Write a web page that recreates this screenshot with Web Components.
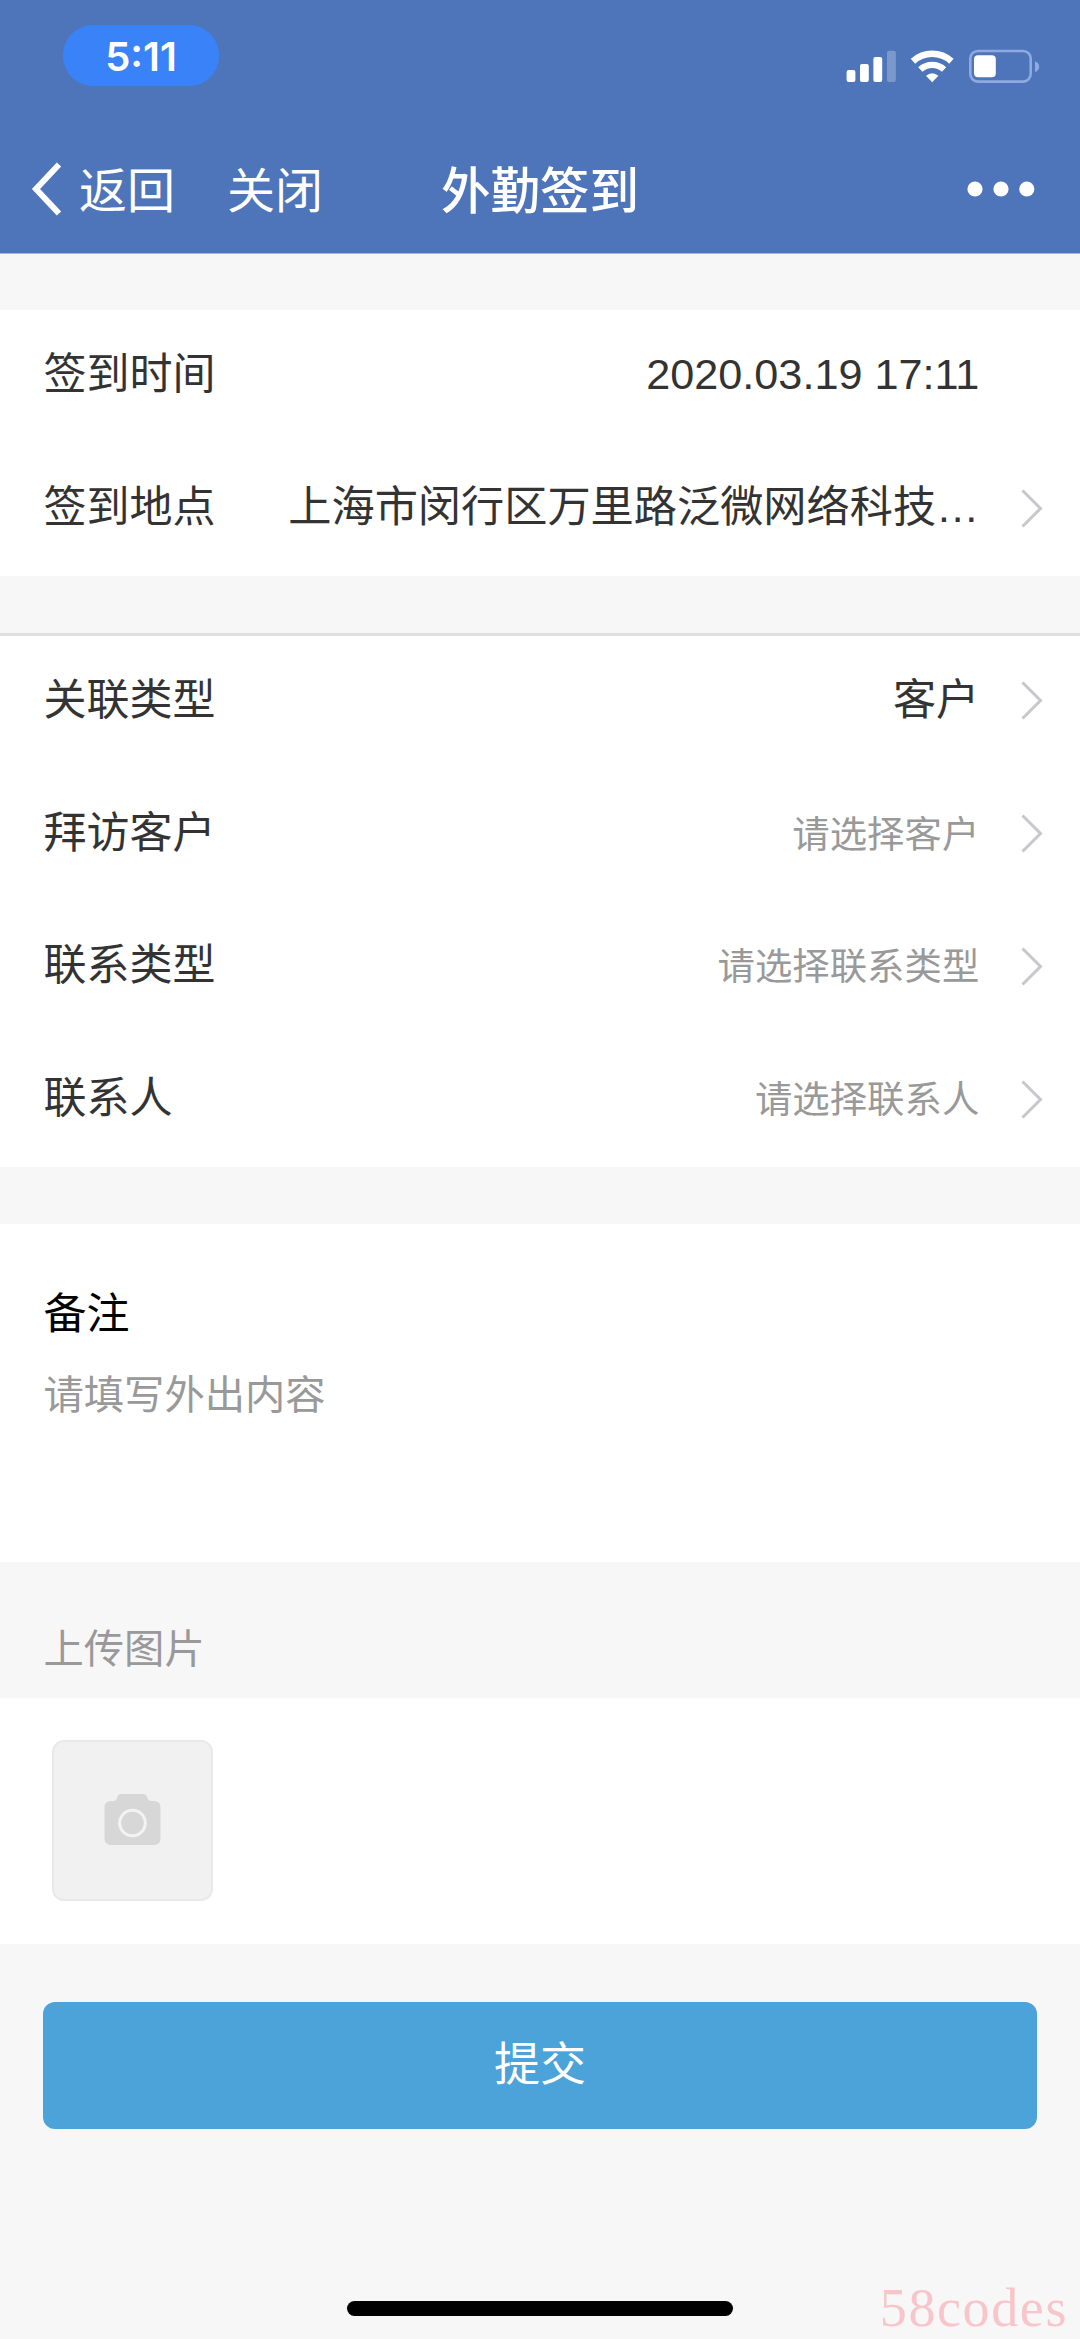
<!DOCTYPE html>
<html lang="zh-CN">
<head>
<meta charset="utf-8">
<meta name="viewport" content="width=device-width">
<title>外勤签到</title>
<style>
  body {
    margin: 0;
    background: #f7f7f7;
    color: #333;
    font-family: "Liberation Sans", "Noto Sans CJK SC", sans-serif;
    font-size: 43.2px;
  }
</style>
</head>
<body>

<checkin-page>
  <status-bar slot="header" time="5:11"></status-bar>
  <nav-bar slot="header" back="返回" close="关闭">外勤签到</nav-bar>

  <form-section>
    <form-row label="签到时间">2020.03.19 17:11</form-row>
    <form-row label="签到地点" link>上海市闵行区万里路泛微网络科技…</form-row>
  </form-section>

  <form-section lined>
    <form-row label="关联类型" link>客户</form-row>
    <form-row label="拜访客户" placeholder="请选择客户" link></form-row>
    <form-row label="联系类型" placeholder="请选择联系类型" link></form-row>
    <form-row label="联系人" placeholder="请选择联系人" link></form-row>
  </form-section>

  <form-section>
    <remark-field label="备注">请填写外出内容</remark-field>
  </form-section>

  <photo-upload>上传图片</photo-upload>
  <submit-button>提交</submit-button>
  <home-indicator slot="footer"></home-indicator>
  <water-mark slot="footer">58codes</water-mark>
</checkin-page>

<script>
// Shared base: puts the class's template into an open shadow root.
class BaseElement extends HTMLElement {
  connectedCallback() {
    if (!this.shadowRoot) this.attachShadow({ mode: "open" });
    this.shadowRoot.innerHTML = this.template();
  }

  attr(name) {
    return this.getAttribute(name) || "";
  }
}

class CheckinPage extends BaseElement {
  template() {
    return `
      <style>
        :host { display: flex; flex-direction: column; position: relative; height: 2339px; }
        header { height: 254px; margin-bottom: 56px; background: #4e75b9; color: #fff; border-bottom: 1px solid #a5b7da; box-sizing: border-box; }
      </style>
      <header><slot name="header"></slot></header>
      <slot></slot>
      <slot name="footer"></slot>`;
  }
}

class StatusBar extends BaseElement {
  template() {
    return `
      <style>
        :host { display: flex; justify-content: space-between; height: 127px; padding: 25px 40px 0 63px; box-sizing: border-box; }
        .time {
          width: 156px; height: 61px; border-radius: 30px; background: #3a82f7;
          font: 600 40px/63px Inter, sans-serif; text-align: center;
        }
        svg { display: block; margin-top: 23px; }
      </style>
      <div class="time">${this.attr("time")}</div>
      <svg width="194" height="36" viewBox="846 48 194 36" fill="#fff">
        <rect x="846.6" y="70" width="8.8" height="12" rx="2"/>
        <rect x="860" y="64" width="8.8" height="18" rx="2"/>
        <rect x="873.4" y="57" width="8.8" height="25" rx="2"/>
        <rect x="887" y="50.7" width="8.8" height="31.3" rx="2" opacity=".26"/>
        <g fill="none" stroke="#fff">
          <path d="M913 61.2 A28.6 28.6 0 0 1 951.4 61.2" stroke-width="6.6"/>
          <path d="M920.3 69.6 A17.4 17.4 0 0 1 944.1 69.6" stroke-width="6.2"/>
        </g>
        <path d="M926 75.8 Q932.2 70.8 938.4 75.8 L932.2 82.2 Z"/>
        <rect x="970.3" y="51" width="60.4" height="30.6" rx="7.5" fill="none" stroke="#8faae0" stroke-width="2.6"/>
        <rect x="974" y="55.3" width="21.8" height="22" rx="4"/>
        <path d="M1035 61.3 Q1039.2 63 1039.2 66.8 T1035 72.3 Z" fill="#8faae0"/>
      </svg>`;
  }
}

class NavBar extends BaseElement {
  template() {
    return `
      <style>
        :host { display: grid; grid-template-columns: 1fr auto 1fr; align-items: center; height: 124px; font-size: 48px; line-height: 72px; padding: 0 45px 0 31px; }
        .left { display: flex; align-items: center; }
        .back { width: 31px; margin-right: 17px; }
        .left span { padding-top: 5px; }
        .close { margin-left: 52px; }
        .title { font-size: 49.5px; font-weight: 500; padding: 5px 0 0 14px; }
        .more { justify-self: end; }
        svg { display: block; }
      </style>
      <div class="left">
        <svg class="back" width="31" height="54" viewBox="0 0 31 54" fill="none" stroke="#fff" stroke-width="6"><path d="M28 2.5 L5 27 L28 51.5"/></svg>
        <span>${this.attr("back")}</span>
        <span class="close">${this.attr("close")}</span>
      </div>
      <div class="title"><slot></slot></div>
      <svg class="more" width="68" height="16" viewBox="0 0 68 16" fill="#fff">
        <circle cx="8" cy="8" r="7.6"/><circle cx="34" cy="8" r="7.6"/><circle cx="59.8" cy="8" r="7.6"/>
      </svg>`;
  }
}

class FormSection extends BaseElement {
  template() {
    return `
      <style>
        :host { display: block; background: #fff; margin-bottom: 57px; }
        :host([lined]) { border-top: 3px solid #dfdfdf; }
      </style>
      <slot></slot>`;
  }
}

class FormRow extends BaseElement {
  template() {
    const placeholder = this.attr("placeholder");
    const arrow = this.hasAttribute("link")
      ? `<svg width="22" height="40" viewBox="0 0 22 40" fill="none" stroke="#c7c7cc" stroke-width="3"><path d="M1.5 1.5 L19.5 19.5 L1.5 37.5"/></svg>`
      : "";
    return `
      <style>
        :host { display: flex; align-items: center; height: 132.75px; padding: 0 37px 0 43.5px; line-height: 64px; }
        .label { flex: none; width: 244.5px; padding-bottom: 4px; font-size: 43px; }
        .value { flex: none; width: 691.3px; padding-bottom: 4px; text-align: right; white-space: nowrap; }
        .placeholder { font-size: 37.4px; color: #999; padding-bottom: 0; }
        svg { display: block; margin: 0 0 1px auto; }
      </style>
      <div class="label">${this.attr("label")}</div>
      <div class="value ${placeholder && "placeholder"}">${placeholder || "<slot></slot>"}</div>
      ${arrow}`;
  }
}

class RemarkField extends BaseElement {
  template() {
    return `
      <style>
        :host { display: block; height: 338px; padding: 58px 44px 0 43.5px; box-sizing: border-box; }
        .label { color: #000; font-size: 43px; line-height: 64px; }
        .text { margin-top: 20px; color: #999; font-size: 40.3px; line-height: 60px; }
      </style>
      <div class="label">${this.attr("label")}</div>
      <div class="text"><slot></slot></div>`;
  }
}

class PhotoUpload extends BaseElement {
  template() {
    return `
      <style>
        :host { display: block; }
        .label { height: 79px; padding: 0 43.5px; color: #999; font-size: 40.3px; line-height: 61px; }
        .photos { height: 246px; padding: 42px 52px; background: #fff; box-sizing: border-box; }
        .add {
          display: flex; justify-content: center; width: 161px; height: 161px; box-sizing: border-box;
          padding: 52px 1px 0 0; border: 2px solid #e9e9e9; border-radius: 12px; background: #f1f1f1;
        }
      </style>
      <div class="label"><slot></slot></div>
      <div class="photos">
        <div class="add">
          <svg width="57" height="52" viewBox="0 0 57 52">
            <path fill="#d7d7d7" d="M16.5 0 H39.5 Q42 0 43 3 Q44.2 7 47.5 7 H50 Q56.5 7 56.5 13.5 V44.5 Q56.5 51 50 51 H7 Q.5 51 .5 44.5 V13.5 Q.5 7 7 7 H9.5 Q12.5 7 13.5 3 Q14.2 0 16.5 0 Z"/>
            <circle cx="28.5" cy="29" r="12.8" fill="none" stroke="#f3f3f3" stroke-width="3"/>
          </svg>
        </div>
      </div>`;
  }
}

class SubmitButton extends BaseElement {
  template() {
    return `
      <style>
        :host { display: block; margin: 58px 43px 0; }
        button {
          display: block; width: 100%; height: 127px; padding: 0 0 2px; border: 0; border-radius: 12px;
          background: #4ca3d9; color: #fff; font: inherit; font-size: 46px; line-height: 68px;
        }
      </style>
      <button type="button"><slot></slot></button>`;
  }
}

class HomeIndicator extends BaseElement {
  template() {
    return `
      <style>
        :host { display: block; width: 386px; height: 15px; margin: auto auto 23px; border-radius: 8px; background: #000; }
      </style>`;
  }
}

// Laid over the bottom right corner of the page.
class WaterMark extends BaseElement {
  template() {
    return `
      <style>
        :host {
          display: block; position: absolute; right: 12px; bottom: 0;
          font: 54px/62px "Liberation Serif", serif; letter-spacing: 1.6px; color: #f8c6ca;
        }
      </style>
      <slot></slot>`;
  }
}

customElements.define("checkin-page", CheckinPage);
customElements.define("status-bar", StatusBar);
customElements.define("nav-bar", NavBar);
customElements.define("form-section", FormSection);
customElements.define("form-row", FormRow);
customElements.define("remark-field", RemarkField);
customElements.define("photo-upload", PhotoUpload);
customElements.define("submit-button", SubmitButton);
customElements.define("home-indicator", HomeIndicator);
customElements.define("water-mark", WaterMark);
</script>
</body>
</html>
